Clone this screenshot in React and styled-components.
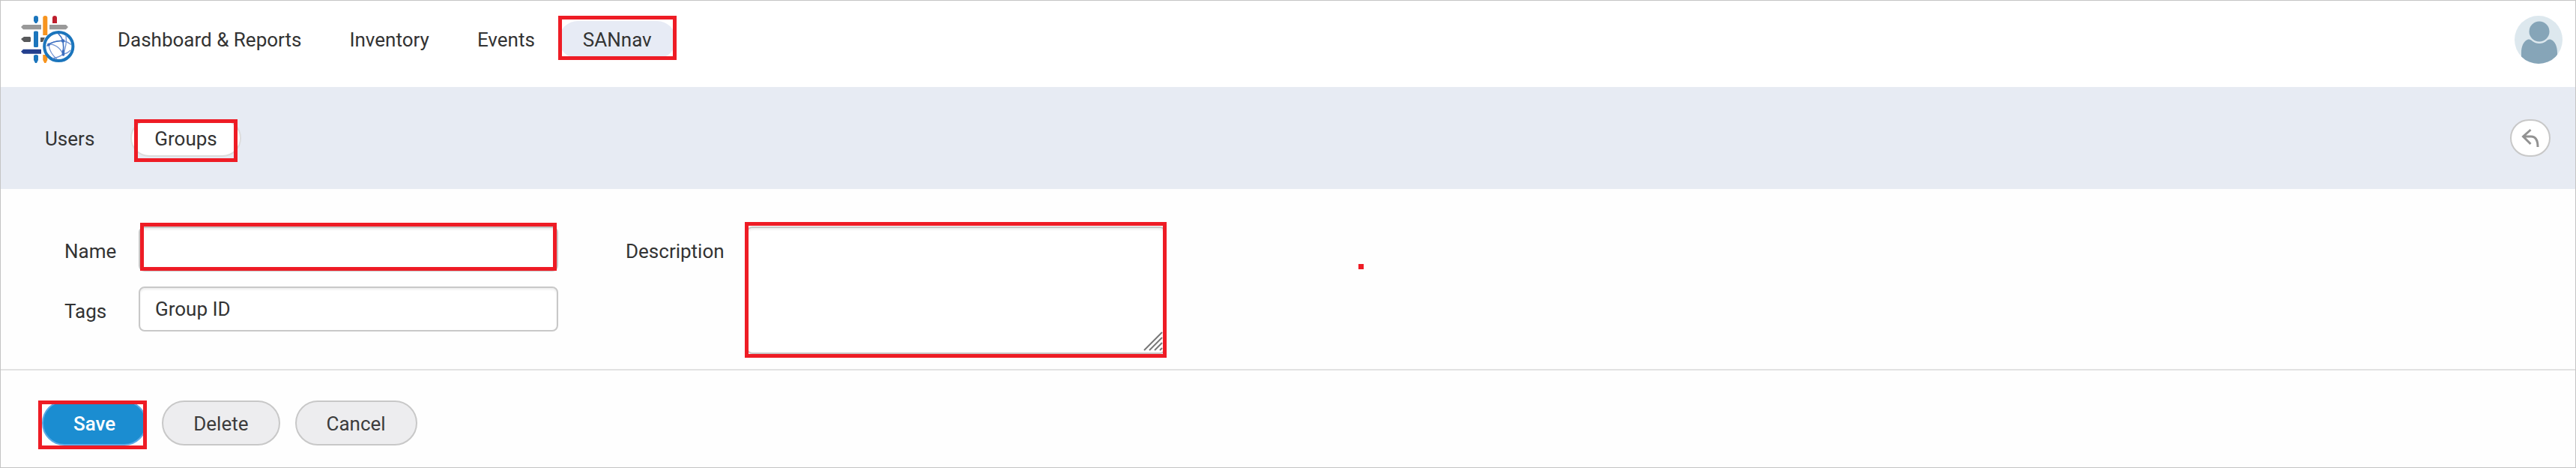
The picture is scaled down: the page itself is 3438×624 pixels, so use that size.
import React from "react";
import styled, { createGlobalStyle, css } from "styled-components";

const GlobalStyle = createGlobalStyle`
  *, *::before, *::after { box-sizing: border-box; }
  body { margin: 0; background: #fefefe; }
  body, button, input, textarea {
    font-family: Roboto, "Liberation Sans", sans-serif;
    font-size: 26px;
    line-height: 30px;
    color: #333;
  }
`;

const Page = styled.div`
  min-height: 100vh;
  border: 1px solid #c4c4c4;
`;

const Header = styled.header`
  display: flex;
  align-items: center;
  padding: 20px 17px 31px 27px;
  background: #fff;
`;

const LogoLink = styled.a`
  display: flex;
  margin-right: 24px;
`;

const NavList = styled.nav`
  display: flex;
  flex: 1;
  gap: ${(p) => p.$gap || 0}px;
`;

const navItem = css`
  position: relative;
  display: block;
  height: 50px;
  border-radius: 25px;
  color: inherit;
  text-decoration: none;
`;

const NavLink = styled.a`
  ${navItem}
  padding: 10px 32px;
  background: ${(p) => (p.$active ? "#e7ebf5" : "transparent")};
`;

const TabLink = styled.a`
  ${navItem}
  padding: 9px 30px;
  border: 2px solid ${(p) => (p.$active ? "#dcdcdc" : "transparent")};
  background: ${(p) => (p.$active ? "#fff" : "transparent")};
`;

const SubBar = styled.div`
  display: flex;
  align-items: center;
  padding: 43px 33px 43px 27px;
  background: #e7ebf3;
`;

const AvatarButton = styled.button`
  display: flex;
  padding: 0;
  border: 0;
  background: none;
`;

const BackButton = styled.button`
  display: flex;
  align-items: center;
  justify-content: center;
  width: 54px;
  height: 50px;
  padding: 0;
  border: 2px solid #c8c8c8;
  border-radius: 25px;
  background: #fff;
`;

const FormArea = styled.div`
  display: flex;
  align-items: flex-start;
  padding: 50px 85px 20px;
  border-bottom: 2px solid #e2e2e2;
`;

const FieldColumn = styled.div`
  display: flex;
  flex-direction: column;
  gap: 20px;
  margin-right: 90px;
`;

const Field = styled.div`
  display: flex;
  align-items: flex-start;
`;

const Label = styled.label`
  width: ${(p) => p.$width}px;
  padding-top: 18px;
`;

const ControlWrap = styled.div`
  position: relative;
  display: flex;
  width: 560px;
`;

const control = css`
  width: 100%;
  margin: 0;
  border: 2px solid #c8c8c8;
  border-radius: 8px;
  background: #fff;
  box-shadow: inset 0 2px 3px rgba(0, 0, 0, 0.08);
  outline: none;
`;

const TextInput = styled.input`
  ${control}
  height: 60px;
  padding: 0 20px;
`;

const TextArea = styled.textarea`
  ${control}
  height: 170px;
  padding: 12px 20px;
  resize: none;
`;

const ResizeGrip = styled.svg`
  position: absolute;
  right: 4px;
  bottom: 4px;
`;

const Highlight = styled.span`
  position: absolute;
  inset: ${(p) => p.$inset};
  border: 5px solid #ee1c25;
  pointer-events: none;
`;

const Marker = styled.span`
  width: 7px;
  height: 7px;
  margin: 50px 0 0 257px;
  background: #ee1c25;
`;

const Actions = styled.div`
  display: flex;
  gap: 20px;
  padding: 40px 55px 29px;
`;

const ActionButton = styled.button`
  position: relative;
  height: 60px;
  padding: 2px 40px 0;
  border: 2px solid ${(p) => (p.$primary ? "#5aa9e6" : "#c8c8c8")};
  border-radius: 30px;
  background: ${(p) => (p.$primary ? "#1b8dd1" : "#ededef")};
  color: ${(p) => (p.$primary ? "#fff" : "#3c3c3c")};
  font-weight: ${(p) => (p.$primary ? 500 : 400)};
`;

function Logo() {
  return (
    <svg width="73" height="64" viewBox="0 0 73 64" aria-hidden="true">
      <g fill="#1b75bc">
        <path d="M17 3a3 3 0 0 1 6 0v4l-2 3h-2l-2-3z" />
        <rect x="17" y="20.5" width="6" height="21.5" rx="1.5" />
        <path d="M17 53l2-1h2l2 1v6l-2 4h-2l-2-4z" />
      </g>
      <path fill="#f7941e" d="M29.3 2.5a3 2.5 0 0 1 6 0V26h-6zM29.3 52h6v7l-2 4h-2l-2-4z" />
      <path fill="#be1e2d" d="M42 3a3 3 0 0 1 6 0v7h-6z" />
      <path fill="#999" d="M0 15l3-3h24v6.300H3zM38 12h22l3 3-3 3.300H38z" />
      <path fill="#58595b" d="M0 31l4-3h8l1 1v5l-1 1H4zM26 29h6l-3 6h-3z" />
      <path fill="#233f8e" d="M0 47.700l3-3h24v6H3z" />
      <circle cx="50.300" cy="41" r="19.100" fill="#fff" stroke="#1b75bc" strokeWidth="4" />
      <g fill="none" stroke="#6f92d2" strokeWidth="1.300">
        <path d="M36 38c8-1 16 4 20 13" />
        <path d="M36 38c8-4 14-5 20-4.500 4 .5 7 2 11 5" />
        <path d="M37 39c1 8 5 14 11 19M42 57c6-1 11-3 14-6M66 46c-3 3-6 5-10 5" />
        <path d="M60 26c1 8 0 17-4 25" />
      </g>
      <g fill="none" stroke="#3c6fc0" strokeLinecap="round">
        <path d="M35 40c6-5 12-7 21-6.500" strokeWidth="1.600" />
        <path d="M50 24c3 3 5 6 6 9.500 1 6 1 11 0 17" strokeWidth="1.600" />
        <path d="M56.500 47v5" strokeWidth="3.500" />
      </g>
      <circle cx="56" cy="33.500" r="2.300" fill="#3c6fc0" />
      <circle cx="37" cy="38.500" r="2" fill="#3c6fc0" />
    </svg>
  );
}

function Avatar() {
  return (
    <svg width="64" height="64" viewBox="0 0 64 64" aria-hidden="true">
      <defs>
        <clipPath id="avatar-disc">
          <circle cx="32" cy="32" r="32" />
        </clipPath>
      </defs>
      <g clipPath="url(#avatar-disc)">
        <rect width="64" height="64" fill="#dde8ee" />
        <path
          fill="#86a5b8"
          d="M9 64V49c0-8 3-15 8-17 3-1 5 0 7 2 5 4 13 4 18 0 2-2 4-3 7-2 5 2 8 9 8 17v15z"
        />
        <circle cx="33" cy="21" r="13.500" fill="#86a5b8" />
      </g>
    </svg>
  );
}

function BackIcon() {
  return (
    <svg width="24" height="26" viewBox="0 0 24 26" fill="none" stroke="#929292" strokeWidth="3" aria-hidden="true">
      <path d="M12.500 2L2.500 11 12.500 21M2.500 11H13c6 0 9 4 9 14" />
    </svg>
  );
}

export default function App() {
  return (
    <>
      <GlobalStyle />
      <Page>
        <Header>
          <LogoLink href="#home" aria-label="Home">
            <Logo />
          </LogoLink>
          <NavList>
            <NavLink href="#dashboard">Dashboard &amp; Reports</NavLink>
            <NavLink href="#inventory">Inventory</NavLink>
            <NavLink href="#events">Events</NavLink>
            <NavLink href="#sannav" $active>
              SANnav
              <Highlight $inset="-7px -1px -2px -1px" />
            </NavLink>
          </NavList>
          <AvatarButton type="button" aria-label="Account">
            <Avatar />
          </AvatarButton>
        </Header>

        <SubBar>
          <NavList $gap={16}>
            <TabLink href="#users">Users</TabLink>
            <TabLink href="#groups" $active>
              Groups
              <Highlight $inset="-2px 3px -9px 3px" />
            </TabLink>
          </NavList>
          <BackButton type="button" aria-label="Back">
            <BackIcon />
          </BackButton>
        </SubBar>

        <form onSubmit={(e) => e.preventDefault()}>
          <FormArea>
            <FieldColumn>
              <Field>
                <Label htmlFor="name" $width={99}>Name</Label>
                <ControlWrap>
                  <TextInput id="name" type="text" />
                  <Highlight $inset="-5px 2px 1px 2px" />
                </ControlWrap>
              </Field>
              <Field>
                <Label htmlFor="tags" $width={99}>Tags</Label>
                <ControlWrap>
                  <TextInput id="tags" type="text" defaultValue="Group ID" />
                </ControlWrap>
              </Field>
            </FieldColumn>
            <Field>
              <Label htmlFor="description" $width={161}>Description</Label>
              <ControlWrap>
                <TextArea id="description" />
                <ResizeGrip width="26" height="26" viewBox="0 0 26 26" stroke="#777" strokeWidth="2" aria-hidden="true">
                  <path d="M1 25L25 1M8 25L25 8M15 25L25 15M22 25l3-3" />
                </ResizeGrip>
                <Highlight $inset="-6px -1px -5px -2px" />
              </ControlWrap>
            </Field>
            <Marker />
          </FormArea>

          <Actions>
            <ActionButton type="submit" $primary>
              Save
              <Highlight $inset="-2px -2px -7px -7px" />
            </ActionButton>
            <ActionButton type="button">Delete</ActionButton>
            <ActionButton type="button">Cancel</ActionButton>
          </Actions>
        </form>
      </Page>
    </>
  );
}
